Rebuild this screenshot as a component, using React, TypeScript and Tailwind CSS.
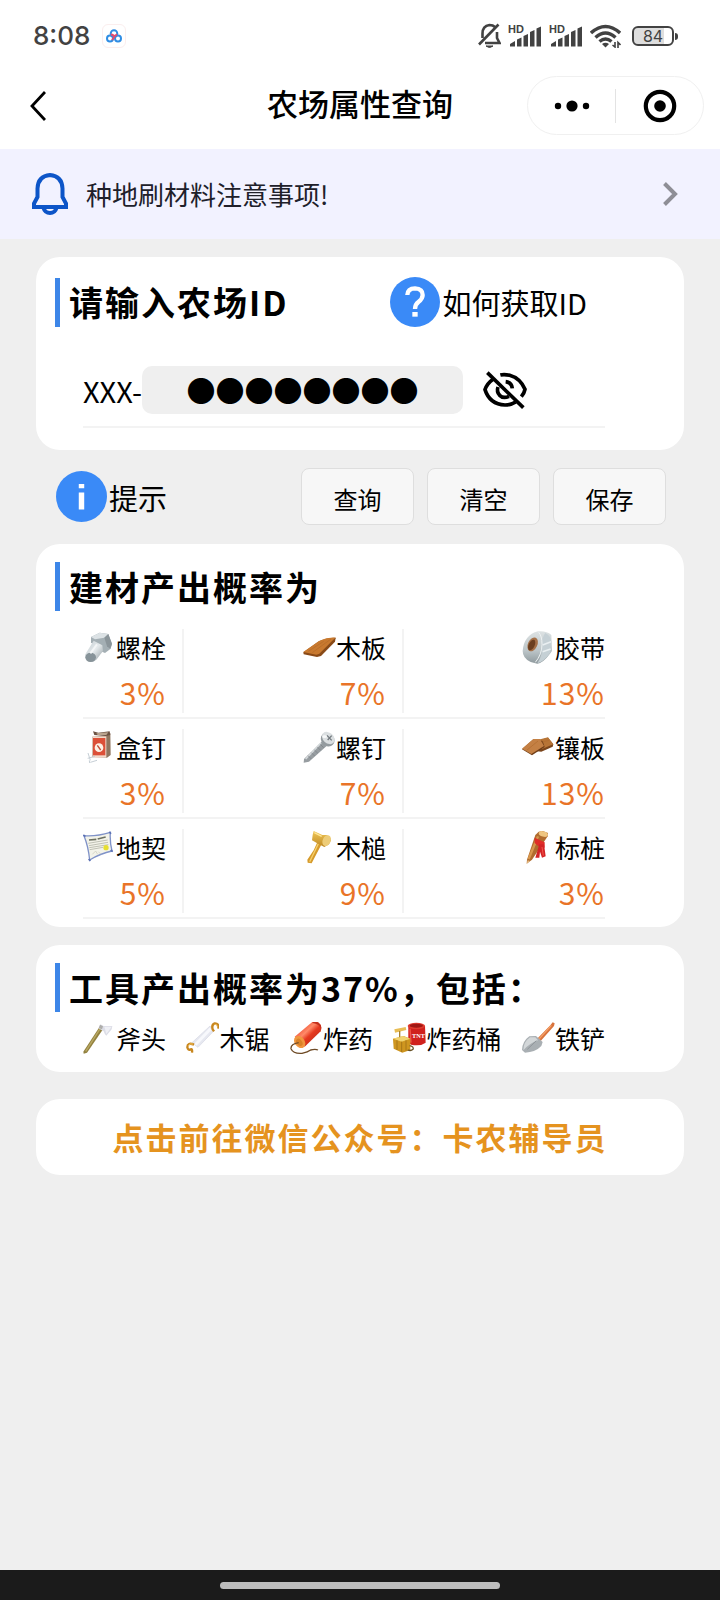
import { useState, type ReactNode } from "react";

interface Item {
  name: string;
  icon: ReactNode;
}

interface Material extends Item {
  rate: string;
}

function Art({ children }: { children: ReactNode }) {
  return (
    <svg viewBox="0 0 99 99" className="size-[33px] shrink-0" aria-hidden="true">
      {children}
    </svg>
  );
}

const bolt = (
  <Art>
    <defs>
      <linearGradient id="bolt" x1="0" y1="0" x2="1" y2="1">
        <stop offset="0" stopColor="#c3ccd1" />
        <stop offset="0.5" stopColor="#e4e9eb" />
        <stop offset="1" stopColor="#8d979c" />
      </linearGradient>
    </defs>
    <path d="M24 18 50 5 76 9 87 38 82 54 66 66 46 58 24 34Z" fill="#a4afb4" />
    <path d="M24 18 50 5 76 9 64 20 36 25Z" fill="#dce2e5" />
    <path d="M64 20 76 9 87 38 82 54 72 46Z" fill="#8b959a" />
    <path d="M32 29 58 43 60 60 40 86Q28 97 14 91Q4 84 7 70Z" fill="url(#bolt)" />
    <ellipse cx="23" cy="79" rx="16" ry="14" fill="#879399" />
    <path d="M42 40 22 67" stroke="#f4f6f7" strokeWidth="6" fill="none" />
  </Art>
);

const plank = (
  <Art>
    <path d="M1 64 48 31Q74 19 98 20L96 32 54 75 42 78 2 70Z" fill="#8a4a17" />
    <path d="M1 63 48 30Q74 18 98 20L50 68 40 71Z" fill="#c8792f" />
    <path d="M16 61 62 31M28 65 84 24" stroke="#b26a27" strokeWidth="2" fill="none" />
    <path d="M50 69 97 22" stroke="#7a4215" strokeWidth="2" />
  </Art>
);

const tape = (
  <Art>
    <defs>
      <linearGradient id="tape" x1="0" y1="0" x2="0" y2="1">
        <stop offset="0" stopColor="#dde2e3" />
        <stop offset="0.6" stopColor="#bcc5c8" />
        <stop offset="1" stopColor="#8e999d" />
      </linearGradient>
    </defs>
    <path d="M48 1Q74-1 88 12L90 60 84 68Q64 95 46 98L26 93Q2 82 2 60Q6 12 48 1Z" fill="url(#tape)" />
    <path d="M70 6Q88 16 88 34L84 66Q66 92 46 97Q64 70 60 40Q60 18 70 6Z" fill="#c5d0d5" />
    <path d="M62 42 87 32M62 62 86 54" stroke="#e9eff1" strokeWidth="5" />
    <path d="M40 94Q60 70 60 40Q60 14 50 4" stroke="#eef2f3" strokeWidth="3" fill="none" />
    <ellipse cx="32" cy="40" rx="14" ry="22" transform="rotate(25 32 40)" fill="#a5714a" />
    <ellipse cx="29" cy="42" rx="9" ry="17" transform="rotate(25 29 42)" fill="#6b3f20" />
  </Art>
);

const nailBox = (
  <Art>
    <path d="M28 17 70 13 82 6 83 72 72 80 27 78Z" fill="#8f755f" />
    <path d="M30 1 46 5 80 1 82 12 68 15 34 12Z" fill="#6b5344" />
    <path d="M40 7 76 4 70 12 44 12Z" fill="#b9a38e" />
    <path d="M28 16H70V80H28Z" fill="#f2d9cb" />
    <path d="M30 21H67V73H30Z" fill="#dc5038" />
    <circle cx="48" cy="50" r="13" fill="#fdf1e5" />
    <path d="M43 43 53 57" stroke="#c04b36" strokeWidth="4" />
    <path d="M15 66 22 88M22 94 42 88M14 82 36 76M20 96 19 88" stroke="#c6cfd6" strokeWidth="3" fill="none" />
  </Art>
);

const screw = (
  <Art>
    <path d="M56 32 70 46 18 92 2 95 3 84Z" fill="#979da1" />
    <path d="M54 36 8 84" stroke="#d3d8da" strokeWidth="5" />
    <path d="M15 74 25 84M25 65 35 75M34 57 44 66M43 48 53 58M52 40 62 50" stroke="#787f84" strokeWidth="2" />
    <ellipse cx="74" cy="26" rx="22" ry="19" transform="rotate(45 74 26)" fill="#949b9f" />
    <ellipse cx="76" cy="21" rx="21" ry="16" transform="rotate(42 76 21)" fill="#dbdfe1" />
    <path d="M72 13 86 28M86 14 74 27" stroke="#737a7f" strokeWidth="4" />
    <ellipse cx="65" cy="17" rx="7" ry="4" fill="#f7f9fa" />
  </Art>
);

const panels = (
  <Art>
    <path d="M46 29 78 20 94 40 92 47 58 62 40 60Z" fill="#7a451c" />
    <path d="M46 27 78 19 94 40 60 54Z" fill="#b77436" />
    <path d="M0 55 34 25 62 30 68 48 30 73Z" fill="#6e3c16" />
    <path d="M0 53 34 24 54 24 66 45 28 69Z" fill="#c48044" />
    <path d="M14 58 48 30M60 33 82 28" stroke="#b06b2d" strokeWidth="2" />
  </Art>
);

const deed = (
  <Art>
    <path d="M3 14Q40 17 82 4Q80 32 87 60Q52 67 20 87Q16 46 3 14Z" fill="#f3f3e9" stroke="#7f92c8" strokeWidth="4" />
    <path d="M18 27 40 25M44 24 68 18" stroke="#6d7161" strokeWidth="5" />
    <path d="M16 37 74 27M18 44 75 34M19 50 76 41M20 56 60 49" stroke="#b4b6aa" strokeWidth="2.5" />
    <path d="M28 70 38 60 44 70M46 62 54 70" stroke="#c9c9bb" strokeWidth="2" fill="none" />
    <circle cx="69" cy="50" r="8" fill="#e6df32" />
    <path d="M1 12 7 17M79 2 84 8M83 57 89 62M17 84 22 90" stroke="#5b71b5" strokeWidth="5" />
  </Art>
);

const mallet = (
  <Art>
    <defs>
      <linearGradient id="mallet" x1="0" y1="0" x2="0" y2="1">
        <stop offset="0" stopColor="#efc654" />
        <stop offset="1" stopColor="#c08a26" />
      </linearGradient>
    </defs>
    <path d="M43 34 56 39 26 97 14 95 13 86 32 58Z" fill="#d69b2c" />
    <path d="M46 38 20 92" stroke="#f6d06b" strokeWidth="4" />
    <path d="M32 0 58 12 70 12Q82 16 84 28L78 40 64 48 48 40 27 28 29 12Z" fill="url(#mallet)" />
    <ellipse cx="71" cy="29" rx="12" ry="17" transform="rotate(25 71 29)" fill="#edcc78" />
    <path d="M34 5 56 16" stroke="#ffe699" strokeWidth="4" />
  </Art>
);

const stake = (
  <Art>
    <path d="M40 12 50 2 62 0 78 6 77 16 30 86 14 98 15 86Z" fill="#b06c2e" />
    <path d="M48 16 20 84" stroke="#d8974d" strokeWidth="7" />
    <ellipse cx="64" cy="9" rx="14" ry="8" transform="rotate(15 64 9)" fill="#efc681" />
    <path d="M38 20 68 34 68 50 52 48 38 36Z" fill="#e02d28" />
    <path d="M52 40 66 40 71 76 60 80 54 62 52 80 40 80Z" fill="#d32426" />
    <path d="M60 48 64 74" stroke="#f4564b" strokeWidth="3" />
    <path d="M14 98 17 88 24 90Z" fill="#e6bb83" />
  </Art>
);

const axe = (
  <Art>
    <path d="M50 14 60 22 12 92 2 95 1 89Z" fill="#92813f" />
    <path d="M50 22 8 88" stroke="#b9a863" strokeWidth="4" />
    <path d="M52 7 62 12 88 12 86 22 70 41Q64 36 62 28L48 20Z" fill="#dcdde6" />
    <path d="M64 14 86 14 70 36Z" fill="#eff0f5" />
    <path d="M51 8 60 13 57 22 47 18Z" fill="#aeadaa" />
  </Art>
);

const saw = (
  <Art>
    <path d="M72 12 84 26 36 76 18 62Z" fill="#e6e8f0" stroke="#d4d6e2" strokeWidth="2" />
    <path d="M74 20 28 68" stroke="#f7f8fc" strokeWidth="9" />
    <path d="M97 20Q99 3 86 4Q76 8 80 22L84 28" stroke="#c8871f" strokeWidth="7" fill="none" />
    <path d="M24 68Q4 60 4 76Q6 86 14 82Q20 80 18 92" stroke="#c8871f" strokeWidth="7" fill="none" />
    <path d="M94 14Q94 6 86 7M21 66Q9 63 7 72" stroke="#f0c060" strokeWidth="3" fill="none" />
  </Art>
);

const dynamite = (
  <Art>
    <defs>
      <linearGradient id="dynamite" x1="0" y1="0" x2="1" y2="1">
        <stop offset="0.2" stopColor="#ee4a30" />
        <stop offset="0.42" stopColor="#ff8a68" />
        <stop offset="0.56" stopColor="#e5391f" />
        <stop offset="1" stopColor="#a82011" />
      </linearGradient>
    </defs>
    <path d="M14 44 64 2Q74-4 86 2Q98 10 92 28L44 74Z" fill="url(#dynamite)" />
    <path d="M66 2Q76-4 86 2Q96 9 93 22Q90 6 66 2Z" fill="#c4301c" />
    <ellipse cx="29" cy="60" rx="15" ry="20" transform="rotate(-38 29 60)" fill="#f0963f" />
    <ellipse cx="28" cy="61" rx="8" ry="12" transform="rotate(-38 28 61)" fill="#d98228" />
    <path d="M26 62Q2 66 3 80Q10 96 36 94Q54 90 62 84Q76 80 84 84" stroke="#6e4a25" strokeWidth="4" fill="none" />
  </Art>
);

const barrel = (
  <Art>
    <path d="M46 14 96 11 98 62Q82 74 54 68L46 60Z" fill="#d0211d" />
    <path d="M51 20 54 62" stroke="#ef5346" strokeWidth="4" />
    <ellipse cx="70" cy="12" rx="26" ry="10" fill="#df3a2e" />
    <ellipse cx="70" cy="11" rx="20" ry="6" fill="#a01713" />
    <text x="57" y="48" fontSize="19" fontWeight="700" fontFamily="Liberation Serif, serif" fill="#fff">TNT</text>
    <path d="M0 50 32 42 52 50V84L28 92 2 80Z" fill="#cf961f" />
    <path d="M0 50 30 42 52 50 26 59Z" fill="#f1d370" />
    <path d="M26 59V90M12 55V84M39 55V86" stroke="#a87618" strokeWidth="3" />
    <path d="M4 22 38 15 40 24 6 32Z" fill="#e8bd55" />
    <path d="M20 27V46" stroke="#a8822f" strokeWidth="4" />
    <path d="M50 71Q64 74 60 82Q54 88 44 84" stroke="#665126" strokeWidth="4" fill="none" />
  </Art>
);

const shovel = (
  <Art>
    <path d="M92 1 98 4 96 12 56 57 47 49 85 10Z" fill="#d9733c" />
    <path d="M88 10 52 50" stroke="#f5a26a" strokeWidth="4" />
    <path d="M22 43 42 42 62 60 58 72Q40 91 9 92L0 84Q1 58 22 43Z" fill="#a9afb3" />
    <path d="M24 46 40 46 48 55Q22 64 4 85Q4 60 24 46Z" fill="#d3d7d9" />
    <path d="M43 56 16 82" stroke="#8f959a" strokeWidth="3" />
  </Art>
);

const MATERIALS: Material[] = [
  { name: "螺栓", rate: "3%", icon: bolt },
  { name: "木板", rate: "7%", icon: plank },
  { name: "胶带", rate: "13%", icon: tape },
  { name: "盒钉", rate: "3%", icon: nailBox },
  { name: "螺钉", rate: "7%", icon: screw },
  { name: "镶板", rate: "13%", icon: panels },
  { name: "地契", rate: "5%", icon: deed },
  { name: "木槌", rate: "9%", icon: mallet },
  { name: "标桩", rate: "3%", icon: stake },
];

const TOOLS: Item[] = [
  { name: "斧头", icon: axe },
  { name: "木锯", icon: saw },
  { name: "炸药", icon: dynamite },
  { name: "炸药桶", icon: barrel },
  { name: "铁铲", icon: shovel },
];

function Signal() {
  return (
    <svg viewBox="0 0 34 24" className="h-6 w-[34px]" fill="#424242" aria-hidden="true">
      <text x="0" y="9" fontSize="11" fontWeight="700" fontFamily="Liberation Sans, sans-serif">
        HD
      </text>
      <path d="M2 22.500V20L7 17V22.500ZM9 22.500V15.500L13.500 13.500V22.500ZM15.500 22.500V12L20 10V22.500ZM22 22.500V8L26.500 6V22.500ZM28.500 22.500V4.500L33 2.500V22.500Z" />
    </svg>
  );
}

function StatusBar() {
  return (
    <div className="flex h-[72px] items-center justify-between pl-[33px] pr-[42px] text-[#424242]">
      <div className="flex items-center gap-3">
        <span className="font-['Inter',sans-serif] text-[26px] leading-8 font-medium">8:08</span>
        <span className="flex size-6 items-center justify-center rounded-md border border-[#fbeeee]">
          <svg viewBox="0 0 16 14" className="h-[14px] w-4" fill="none" strokeWidth="2" aria-hidden="true">
            <circle cx="8" cy="4.500" r="3.300" stroke="#2f8de4" />
            <circle cx="4" cy="9.500" r="3" stroke="#2f8de4" />
            <circle cx="12" cy="9.500" r="3" stroke="#2f8de4" />
            <path d="M4.800 5.500Q8 5.500 8 8.500Q9 6 11.200 5.500M8 8.500 6 11" stroke="#e04b70" />
          </svg>
        </span>
      </div>
      <div className="flex items-center gap-[7px]">
        <svg viewBox="0 0 23 26" className="h-[26px] w-[23px]" fill="none" stroke="#424242" strokeWidth="2.600" aria-hidden="true">
          <path d="M4.500 15V10.500Q4.500 3 11.500 2Q15 2 17 4M19 9V15L21.500 20H7" />
          <path d="M1 21.500 20.500 1.500" />
          <path d="M8 23Q11.500 26 15 23Z" fill="#424242" strokeWidth="1" />
        </svg>
        <Signal />
        <Signal />
        <svg viewBox="0 0 31 24" className="h-6 w-[31px]" fill="none" stroke="#424242" strokeWidth="3.400" aria-hidden="true">
          <path d="M1 9Q15.500-4 30 9M5.500 13.500Q15.500 4.500 25.500 13.500M9.500 17.500Q15.500 12.500 21.500 17.500" />
          <path d="M12 20Q15.500 17.500 19 20L15.500 23.500Z" fill="#424242" stroke="none" />
          <path d="M25 18V23L22.500 21M28 24V18.500L30.500 21" strokeWidth="1.600" />
        </svg>
        <div className="ml-1 flex items-center gap-px">
          <div className="flex h-5 w-[42px] items-center justify-center rounded-md border-2 border-[#424242] bg-[linear-gradient(90deg,#dedede_78%,#ffffff_78%)] bg-clip-padding">
            <span className="font-['Inter',sans-serif] text-base leading-4">84</span>
          </div>
          <span className="h-[7px] w-[3px] rounded-r-sm bg-[#424242]" />
        </div>
      </div>
    </div>
  );
}

function NavBar() {
  return (
    <header className="relative flex h-[77px] items-center justify-between pl-[30px] pr-4 pb-[10px]">
      <button type="button" aria-label="返回">
        <svg viewBox="0 0 16 30" className="h-[30px] w-4" fill="none" stroke="#000" strokeWidth="2.800" aria-hidden="true">
          <path d="M15 1 2 15 15 29" />
        </svg>
      </button>
      <h1 className="pointer-events-none absolute inset-x-0 top-2 text-center text-[31px] leading-[46px] font-medium">
        农场属性查询
      </h1>
      <div className="flex h-[59px] w-[177px] items-center rounded-full border border-[#f0f0f0]">
        <button type="button" aria-label="更多" className="flex h-[34px] flex-1 items-center justify-center border-r border-[#e3e3e3]">
          <svg viewBox="0 0 36 12" className="h-3 w-9" aria-hidden="true">
            <circle cx="4" cy="6" r="3.200" />
            <circle cx="18" cy="6" r="5.600" />
            <circle cx="32" cy="6" r="3.200" />
          </svg>
        </button>
        <button type="button" aria-label="关闭" className="flex h-[34px] flex-1 items-center justify-center">
          <svg viewBox="0 0 34 34" className="size-[34px]" aria-hidden="true">
            <circle cx="17" cy="17" r="14.200" fill="none" stroke="#000" strokeWidth="4.200" />
            <circle cx="17" cy="17" r="5.800" />
          </svg>
        </button>
      </div>
    </header>
  );
}

function Heading({ children }: { children: ReactNode }) {
  return (
    <div className="flex items-center gap-[9px]">
      <span className="h-[49px] w-[5px] bg-[#3d86e8]" />
      <h2 className="text-[34px] leading-[48px] font-bold tracking-[2px] whitespace-nowrap">{children}</h2>
    </div>
  );
}

function Card({ className = "", children }: { className?: string; children: ReactNode }) {
  return <section className={`rounded-3xl bg-white pl-[19px] ${className}`}>{children}</section>;
}

function EyeOff() {
  return (
    <svg viewBox="0 0 132 114" className="h-[38px] w-11" fill="none" stroke="#000" strokeWidth="11" aria-hidden="true">
      <path d="M13 5 121 110" />
      <path d="M52 12Q64 9 80 13Q112 22 126 55Q124 66 115 77" />
      <path d="M30 25Q12 38 6 56Q20 100 66 102Q84 102 98 93" />
      <path d="M45 48Q40 62 50 73Q61 84 78 76" />
      <path d="M68 32Q86 34 88 52" />
    </svg>
  );
}

const ACTION =
  "h-[57px] w-[113px] rounded-lg border border-[#dedede] bg-[#f7f7f7] text-2xl leading-8 pt-1";

export default function App() {
  const [farmId, setFarmId] = useState("10000000");
  const [hidden, setHidden] = useState(true);

  return (
    <div className="flex min-h-screen flex-col bg-[#efefef] font-['Noto_Sans_CJK_SC',sans-serif] text-black">
      <div className="bg-white">
        <StatusBar />
        <NavBar />
      </div>

      <a href="#notice" className="flex h-[90px] items-center bg-[#f2f2ff] pl-8 pr-[42px] text-[#20202a]">
        <svg viewBox="0 0 36 42" className="h-[42px] w-9" fill="none" stroke="#0d55c8" strokeWidth="4" aria-hidden="true">
          <path d="M2 34V30.500L5.500 24V15.500Q6 3 18 2Q30 3 30.500 15.500V24L34 30.500V34Z" />
          <path d="M11.500 35Q13 40 18 40Q23 40 24.500 35" />
        </svg>
        <span className="ml-[18px] flex-1 text-[26px] leading-9">种地刷材料注意事项!</span>
        <svg viewBox="0 0 15 24" className="h-6 w-[15px]" fill="none" stroke="#8e8e96" strokeWidth="4" aria-hidden="true">
          <path d="M1.500 1.500 12 12 1.500 22.500" />
        </svg>
      </a>

      <main className="px-9 pt-[18px]">
        <Card className="pt-5 pb-[22px]">
          <div className="flex items-center">
            <Heading>
              <label htmlFor="farm-id">请输入农场ID</label>
            </Heading>
            <a href="#help" className="mr-[97px] ml-auto flex items-center gap-[3px]">
              <svg viewBox="0 0 150 150" className="size-[50px]" aria-hidden="true">
                <circle cx="75" cy="75" r="75" fill="#3a8af7" />
                <path d="M52 54Q53 34 75 34Q98 35 98 54Q98 65 86 74Q75 82 75 96" fill="none" stroke="#fff" strokeWidth="13" />
                <path d="M67 105H83V119H67Z" fill="#fff" />
              </svg>
              <span className="text-[29px] leading-10">如何获取ID</span>
            </a>
          </div>

          <div className="mt-[39px] mr-[79px] ml-7 flex items-center border-b-2 border-[#f3f3f3] pb-3">
            <span className="text-[29px] leading-10">XXX-</span>
            <input
              id="farm-id"
              type="text"
              className="h-12 w-[321px] min-w-0 rounded-[10px] bg-[#efefef] pb-[2px] text-center text-[29px] leading-10 outline-none"
              value={hidden ? "●".repeat(farmId.length) : farmId}
              readOnly={hidden}
              onChange={(e) => setFarmId(e.target.value)}
            />
            <button type="button" className="ml-5" aria-label="显示或隐藏" onClick={() => setHidden(!hidden)}>
              <EyeOff />
            </button>
          </div>
        </Card>

        <div className="flex items-center justify-between pt-[18px] pr-[18px] pb-[19px] pl-5">
          <a href="#tips" className="flex items-center gap-[2px]">
            <svg viewBox="0 0 150 150" className="size-[51px]" aria-hidden="true">
              <circle cx="75" cy="75" r="75" fill="#3a8af7" />
              <path d="M67 38H83V51H67ZM67 63H83V113H67Z" fill="#fff" />
            </svg>
            <span className="text-[29px] leading-10">提示</span>
          </a>
          <div className="flex gap-[13px]">
            <button type="button" className={ACTION}>查询</button>
            <button type="button" className={ACTION} onClick={() => setFarmId("")}>清空</button>
            <button type="button" className={ACTION}>保存</button>
          </div>
        </div>

        <Card className="pt-[18px] pb-2">
          <Heading>建材产出概率为</Heading>
          <div className="mt-2 mr-[79px] ml-7 grid grid-cols-[101px_221fr_202fr]">
            {MATERIALS.map((m) => (
              <div key={m.name} className="group border-b-2 border-[#f3f3f3] pt-[10px] pb-1">
                <div className="flex h-[84px] flex-col items-end justify-between border-r-2 border-[#f3f3f3] pr-4 pb-[3px] group-nth-[3n]:border-r-0 group-nth-[3n]:pr-0">
                  <div className="flex items-center">
                    {m.icon}
                    <span className="text-[25px] leading-9">{m.name}</span>
                  </div>
                  <span className="text-[30px] leading-9 tracking-[1px] text-[#e97428]">{m.rate}</span>
                </div>
              </div>
            ))}
          </div>
        </Card>

        <Card className="mt-[18px] pt-[18px] pb-[14px]">
          <Heading>工具产出概率为37%，包括：</Heading>
          <ul className="mt-[6px] mr-[79px] ml-7 flex items-center justify-between">
            {TOOLS.map((t) => (
              <li key={t.name} className="flex items-center">
                {t.icon}
                <span className="text-[25px] leading-10 whitespace-nowrap">{t.name}</span>
              </li>
            ))}
          </ul>
        </Card>

        <a
          href="#official-account"
          className="mt-[27px] flex h-[76px] items-center justify-center rounded-3xl bg-white text-[31px] font-bold tracking-[2px] text-[#e5931f]"
        >
          点击前往微信公众号：卡农辅导员
        </a>
      </main>

      <footer className="mt-auto flex h-[30px] items-center justify-center bg-[#1b1b1b]">
        <span className="h-[7px] w-[280px] rounded-full bg-[#bdbdbd]" />
      </footer>
    </div>
  );
}
